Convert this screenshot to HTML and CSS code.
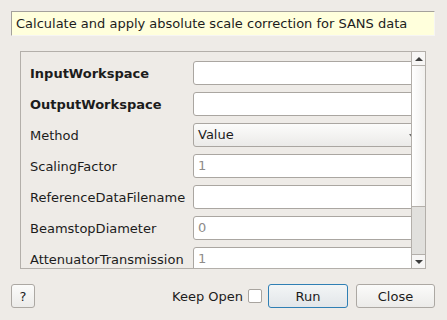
FILE: index.html
```html
<!DOCTYPE html>
<html lang="en">
<head>
    <meta charset="UTF-8">
    <title>AbsoluteScale</title>
    <link rel="stylesheet" href="styles.css">
</head>
<body>
    <div class="dialog">
        <div class="description">Calculate and apply absolute scale correction for SANS data</div>

        <div class="scroll-frame">
            <div class="viewport">
                <div class="prop-grid">
                    <label class="prop-label required">InputWorkspace</label>
                    <div class="field"></div>

                    <label class="prop-label required">OutputWorkspace</label>
                    <div class="field"></div>

                    <label class="prop-label">Method</label>
                    <div class="field combo">Value<span class="combo-arrow"></span></div>

                    <label class="prop-label">ScalingFactor</label>
                    <div class="field default">1</div>

                    <label class="prop-label">ReferenceDataFilename</label>
                    <div class="field"></div>

                    <label class="prop-label">BeamstopDiameter</label>
                    <div class="field default">0</div>

                    <label class="prop-label">AttenuatorTransmission</label>
                    <div class="field default">1</div>
                </div>
            </div>
            <div class="scrollbar">
                <div class="sb-btn"><span class="arrow-up"></span></div>
                <div class="sb-handle"></div>
                <div class="sb-trough"></div>
                <div class="sb-btn sb-btn-down"><span class="arrow-down"></span></div>
            </div>
        </div>

        <div class="button-row">
            <button class="btn btn-help">?</button>
            <div class="spacer"></div>
            <span class="keep-open">Keep Open</span>
            <span class="checkbox"></span>
            <button class="btn btn-run">Run</button>
            <button class="btn btn-close">Close</button>
        </div>
    </div>
</body>
</html>
```

FILE: styles.css
```css
:root {
    --window-bg: #eeebe7;
    --frame-border: #b3afaa;
    --field-border: #aaa6a1;
    --text: #1c1c1c;
}

* {
    box-sizing: border-box;
    margin: 0;
    padding: 0;
}

body {
    width: 447px;
    height: 320px;
    background: var(--window-bg);
    font-family: 'DejaVu Sans', 'Liberation Sans', sans-serif;
    font-size: 13px;
    color: var(--text);
    overflow: hidden;
}

.dialog {
    padding: 11px 12px 0 11px;
    display: flex;
    flex-direction: column;
}

.description {
    height: 25px;
    padding: 0 0 0 4px;
    line-height: 23px;
    background: #ffffdc;
    border-top: 1px solid #a4a19c;
    border-left: 1px solid #a4a19c;
    border-right: 1px solid #f6f5f3;
    border-bottom: 1px solid #f6f5f3;
    white-space: nowrap;
}

/* 属性滚动区域 */
.scroll-frame {
    margin: 15px 9px 0 9px;
    height: 218px;
    border: 1px solid var(--frame-border);
    display: flex;
}

.viewport {
    flex: 1;
    overflow: hidden;
}

.prop-grid {
    width: 400px;
    padding: 9px 0 0 9px;
    display: grid;
    grid-template-columns: 163px 227px;
    grid-auto-rows: 24px;
    row-gap: 7px;
    align-items: center;
}

.prop-label {
    white-space: nowrap;
    padding-top: 1px;
}

.prop-label.required {
    font-weight: bold;
}

.field {
    height: 24px;
    background: white;
    border: 1px solid var(--field-border);
    border-radius: 3px;
    padding-left: 4px;
    line-height: 22px;
    position: relative;
}

.field.default {
    color: #8e8c89;
}

.field.combo {
    background: linear-gradient(#fcfcfb, #ebeae8);
    color: var(--text);
}

.combo-arrow {
    position: absolute;
    left: 215px;
    top: 10px;
    border-left: 3px solid transparent;
    border-right: 3px solid transparent;
    border-top: 4px solid #6a6a6a;
}

/* 滚动条 */
.scrollbar {
    width: 14px;
    border-left: 1px solid var(--frame-border);
    display: flex;
    flex-direction: column;
    background: #e0dfdc;
}

.sb-btn {
    height: 14px;
    background: #f7f6f5;
    border-bottom: 1px solid var(--frame-border);
    display: flex;
    align-items: center;
    justify-content: center;
}

.sb-btn-down {
    border-bottom: none;
    border-top: 1px solid var(--frame-border);
}

.arrow-up {
    border-left: 4px solid transparent;
    border-right: 4px solid transparent;
    border-bottom: 4px solid #3d3d3d;
}

.arrow-down {
    border-left: 4px solid transparent;
    border-right: 4px solid transparent;
    border-top: 4px solid #3d3d3d;
}

.sb-handle {
    height: 141px;
    background: linear-gradient(to right, #ffffff, #f1f0ee);
    border-bottom: 1px solid var(--frame-border);
}

.sb-trough {
    flex: 1;
    background: #e1e0dd;
}

/* 底部按钮 */
.button-row {
    margin-top: 15px;
    height: 24px;
    display: flex;
    align-items: center;
}

.spacer {
    flex: 1;
}

.btn {
    height: 24px;
    font-family: inherit;
    font-size: 13px;
    color: var(--text);
    background: linear-gradient(#fbfbfa, #ecebe9);
    border: 1px solid #aca8a3;
    border-radius: 3px;
}

.btn-help {
    width: 24px;
}

.btn-run {
    width: 80px;
    margin-left: 6px;
    border-color: #2f7fb4;
    background: linear-gradient(#f3f5f6, #e2e6e9);
}

.btn-close {
    width: 79px;
    margin-left: 8px;
}

.keep-open {
    margin-right: 5px;
}

.checkbox {
    width: 14px;
    height: 14px;
    background: white;
    border: 1px solid #a8a49f;
    border-radius: 2px;
}
```
